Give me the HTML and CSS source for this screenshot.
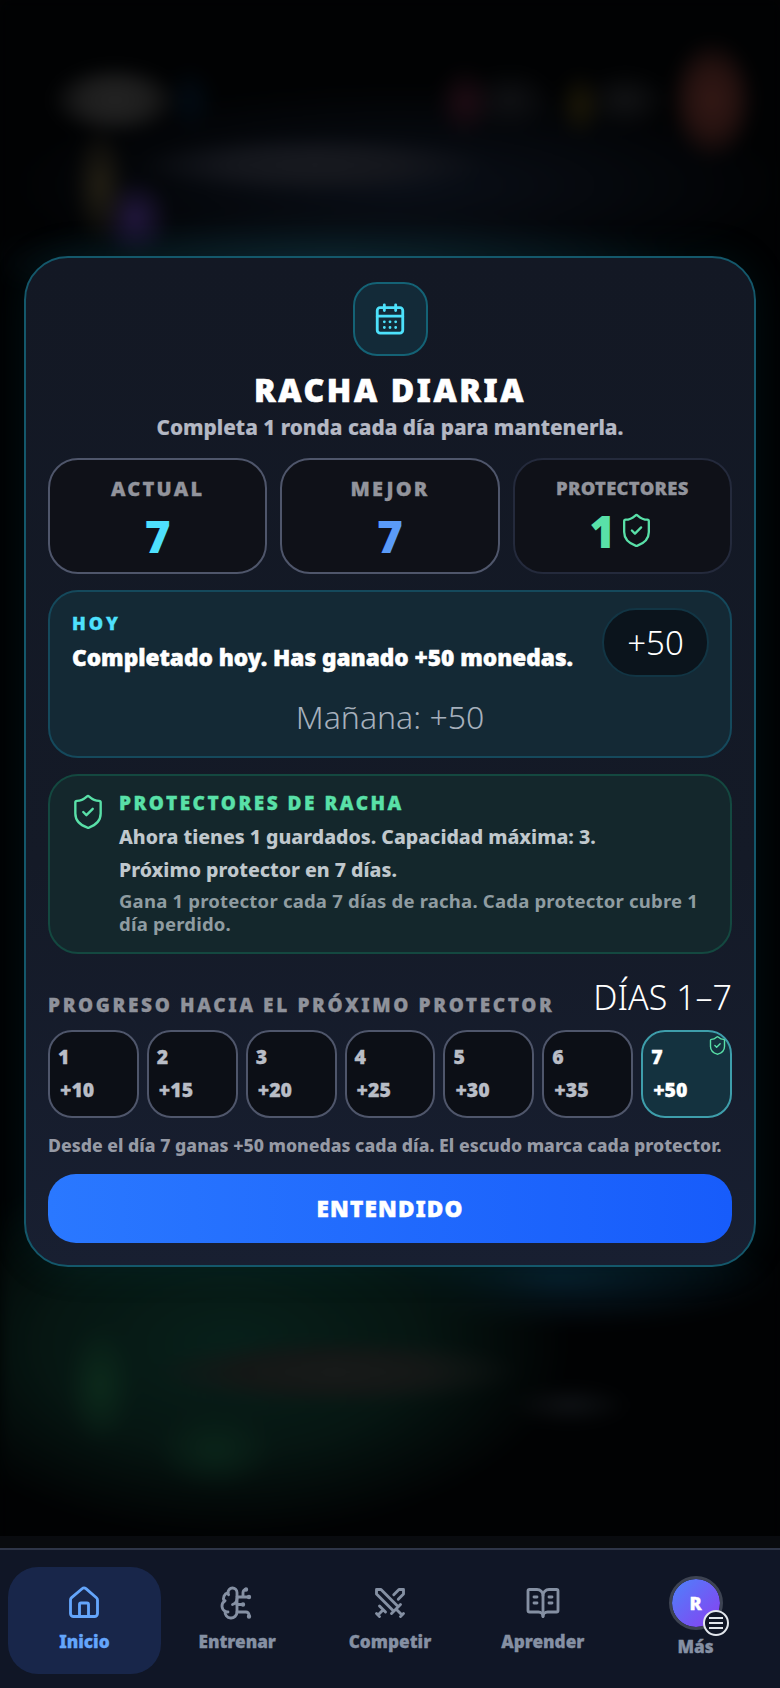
FILE: index.html
```html
<!DOCTYPE html>
<html lang="es">
<head>
<meta charset="utf-8">
<title>Racha diaria</title>
<link rel="stylesheet" href="styles.css">
</head>
<body>
<svg class="defs" width="0" height="0" aria-hidden="true">
  <symbol id="shield" viewBox="0 0 24 24"><path d="M20 13c0 5-3.5 7.5-7.66 8.95a1 1 0 0 1-.67-.01C7.5 20.5 4 18 4 13V6a1 1 0 0 1 1-1c2 0 4.5-1.2 6.24-2.72a1.17 1.17 0 0 1 1.52 0C14.51 3.81 17 5 19 5a1 1 0 0 1 1 1z"/><path d="m9 12 2 2 4-4"/></symbol>
</svg>
<div class="backdrop"></div>
<main class="stage">
  <section class="modal">
    <div class="badge">
      <svg class="badge-icon" viewBox="0 0 24 24"><path d="M8 2v4M16 2v4M3 10h18"/><rect x="3" y="4" width="18" height="18" rx="2"/><path d="M8 14h.01M12 14h.01M16 14h.01M8 18h.01M12 18h.01M16 18h.01"/></svg>
    </div>
    <h1 class="title">RACHA DIARIA</h1>
    <p class="subtitle">Completa 1 ronda cada día para mantenerla.</p>

    <div class="stats">
      <div class="stat">
        <div class="stat-label">ACTUAL</div>
        <div class="stat-value cyan">7</div>
      </div>
      <div class="stat">
        <div class="stat-label">MEJOR</div>
        <div class="stat-value blue">7</div>
      </div>
      <div class="stat stat-dim">
        <div class="stat-label small">PROTECTORES</div>
        <div class="stat-value green">1<svg class="stat-shield"><use href="#shield"/></svg></div>
      </div>
    </div>

    <div class="today">
      <div class="today-top">
        <div>
          <div class="today-label">HOY</div>
          <div class="today-text">Completado hoy. Has ganado +50 monedas.</div>
        </div>
        <div class="pill">+50</div>
      </div>
      <div class="tomorrow">Mañana: +50</div>
    </div>

    <div class="guards">
      <svg class="guards-icon"><use href="#shield"/></svg>
      <div class="guards-body">
        <div class="guards-title">PROTECTORES DE RACHA</div>
        <div class="guards-line first">Ahora tienes 1 guardados. Capacidad máxima: 3.</div>
        <div class="guards-line">Próximo protector en 7 días.</div>
        <div class="guards-note">Gana 1 protector cada 7 días de racha. Cada protector cubre 1 día perdido.</div>
      </div>
    </div>

    <div class="progress-head">
      <div class="progress-title">PROGRESO HACIA EL PRÓXIMO PROTECTOR</div>
      <div class="progress-range">DÍAS 1–7</div>
    </div>
    <div class="days">
      <div class="day"><span class="day-n">1</span><span class="day-c">+10</span></div>
      <div class="day"><span class="day-n">2</span><span class="day-c">+15</span></div>
      <div class="day"><span class="day-n">3</span><span class="day-c">+20</span></div>
      <div class="day"><span class="day-n">4</span><span class="day-c">+25</span></div>
      <div class="day"><span class="day-n">5</span><span class="day-c">+30</span></div>
      <div class="day"><span class="day-n">6</span><span class="day-c">+35</span></div>
      <div class="day day-on"><span class="day-n">7</span><span class="day-c">+50</span><svg class="day-shield"><use href="#shield"/></svg></div>
    </div>
    <p class="note">Desde el día 7 ganas +50 monedas cada día. El escudo marca cada protector.</p>
    <button class="cta">ENTENDIDO</button>
  </section>
</main>
<nav class="nav">
  <div class="tab tab-on">
    <svg class="tab-icon" viewBox="0 0 24 24"><path d="M15 21v-8a1 1 0 0 0-1-1h-4a1 1 0 0 0-1 1v8"/><path d="M3 10a2 2 0 0 1 .709-1.528l7-5.999a2 2 0 0 1 2.582 0l7 5.999A2 2 0 0 1 21 10v9a2 2 0 0 1-2 2H5a2 2 0 0 1-2-2z"/></svg>
    <span>Inicio</span>
  </div>
  <div class="tab">
    <svg class="tab-icon" viewBox="0 0 24 24"><path d="M12 5a3 3 0 1 0-5.997.125 4 4 0 0 0-2.526 5.77 4 4 0 0 0 .556 6.588A4 4 0 1 0 12 18Z"/><path d="M9 13a4.5 4.5 0 0 0 3-4M6.003 5.125A3 3 0 0 0 6.401 6.5M3.477 10.896a4 4 0 0 1 .585-.396M6 18a4 4 0 0 1-1.967-.516M12 13h4M12 18h6a2 2 0 0 1 2 2v1M12 8h8M16 8V5a2 2 0 0 1 2-2"/><circle cx="16" cy="13" r=".5"/><circle cx="18" cy="3" r=".5"/><circle cx="20" cy="21" r=".5"/><circle cx="20" cy="8" r=".5"/></svg>
    <span>Entrenar</span>
  </div>
  <div class="tab">
    <svg class="tab-icon" viewBox="0 0 24 24"><path d="M14.5 17.5 3 6V3h3l11.5 11.5M13 19l6-6M16 16l4 4M19 21l2-2M14.5 6.5 18 3h3v3l-3.5 3.5M5 14l4 4M7 17l-3 3M3 19l2 2"/></svg>
    <span>Competir</span>
  </div>
  <div class="tab">
    <svg class="tab-icon" viewBox="0 0 24 24"><path d="M12 7v14M16 12h2M16 8h2M6 12h2M6 8h2"/><path d="M3 18a1 1 0 0 1-1-1V4a1 1 0 0 1 1-1h5a4 4 0 0 1 4 4 4 4 0 0 1 4-4h5a1 1 0 0 1 1 1v13a1 1 0 0 1-1 1h-6a3 3 0 0 0-3 3 3 3 0 0 0-3-3z"/></svg>
    <span>Aprender</span>
  </div>
  <div class="tab tab-more">
    <div class="avatar">R
      <div class="menu-dot"><i></i><i></i><i></i></div>
    </div>
    <span>Más</span>
  </div>
</nav>
</body>
</html>
```
FILE: styles.css
```css
* { box-sizing: border-box; }
html, body { margin: 0; padding: 0; }
body {
  position: relative;
  width: 780px;
  height: 1688px;
  display: flex;
  flex-direction: column;
  overflow: hidden;
  background: #020304;
  font-family: "Noto Sans", "Open Sans", sans-serif;
  color: #fff;
}
.defs { position: absolute; }
.backdrop {
  position: absolute;
  inset: 0 0 140px 0;
  filter: blur(7px);
  background:
    radial-gradient(ellipse 65px 36px at 115px 100px, #232323 0%, #1d1d1d 50%, transparent 100%),
    radial-gradient(ellipse 26px 34px at 190px 100px, #020b14 0%, transparent 100%),
    radial-gradient(ellipse 30px 36px at 465px 102px, #1f0c14 0%, transparent 100%),
    radial-gradient(ellipse 45px 32px at 510px 100px, #101114 0%, transparent 100%),
    radial-gradient(ellipse 24px 34px at 580px 105px, #1b1707 0%, transparent 100%),
    radial-gradient(ellipse 45px 30px at 625px 100px, #121315 0%, transparent 100%),
    radial-gradient(ellipse 44px 62px at 712px 100px, #331815 0%, #261210 50%, transparent 100%),
    radial-gradient(ellipse 28px 60px at 100px 185px, #231f14 0%, transparent 100%),
    radial-gradient(ellipse 36px 40px at 135px 218px, #231840 0%, transparent 100%),
    radial-gradient(ellipse 175px 30px at 315px 165px, #181a20 0%, #14161c 50%, transparent 100%),
    radial-gradient(ellipse 360px 50px at 330px 262px, #0d2029 0%, transparent 100%),
    radial-gradient(ellipse 390px 100px at 400px 185px, #0a0f18 0%, transparent 100%),
    radial-gradient(ellipse 34px 60px at 100px 1385px, #0c2a1b 0%, transparent 100%),
    radial-gradient(ellipse 185px 34px at 335px 1372px, #181b1a 0%, #141716 50%, transparent 100%),
    radial-gradient(ellipse 60px 20px at 570px 1405px, #0f1215 0%, transparent 100%),
    radial-gradient(ellipse 60px 40px at 215px 1450px, #0a2419 0%, transparent 100%),
    radial-gradient(ellipse 340px 190px at 230px 1345px, #07201a 0%, #061612 55%, transparent 100%),
    radial-gradient(ellipse 220px 50px at 560px 1278px, #071c28 0%, transparent 100%),
    #010203;
}
.stage {
  position: relative;
  flex: 1;
  padding: 256px 24px 0;
}
.modal {
  height: 1011px;
  padding: 24px 22px 0;
  display: flex;
  flex-direction: column;
  border: 2px solid #14586b;
  border-radius: 44px;
  background: linear-gradient(180deg, #131824 0%, #141a27 60%, #181f31 100%);
  box-shadow: 0 0 40px rgba(20, 120, 140, 0.12);
}
.badge {
  align-self: center;
  width: 75px;
  height: 74px;
  display: flex;
  align-items: center;
  justify-content: center;
  border: 2px solid #146275;
  border-radius: 24px;
  background: #132a38;
}
.badge-icon { width: 34px; height: 34px; fill: none; stroke: #4de1fb; stroke-width: 2; stroke-linecap: round; stroke-linejoin: round; }
.title {
  margin: 12px 0 0;
  text-align: center;
  font-size: 32px;
  line-height: 44px;
  font-weight: 900;
  letter-spacing: 2.6px;
  -webkit-text-stroke: .6px currentColor;
}
.subtitle {
  margin: 1px 0 0;
  text-align: center;
  font-size: 20.8px;
  line-height: 28px;
  font-weight: 800;
  color: #b4b8c4;
  -webkit-text-stroke: .2px currentColor;
}
.stats {
  margin-top: 17px;
  display: grid;
  grid-template-columns: repeat(3, 1fr);
  gap: 13px;
}
.stat {
  height: 116px;
  padding-top: 16px;
  display: flex;
  flex-direction: column;
  align-items: center;
  border: 2px solid #4f566b;
  border-radius: 30px;
  background: #0f1118;
}
.stat-dim { border-color: #242a3c; }
.stat-label {
  font-size: 20px;
  line-height: 26px;
  font-weight: 900;
  letter-spacing: 2.2px;
  color: #92949c;
  -webkit-text-stroke: .3px currentColor;
}
.stat-label.small { font-size: 18.4px; letter-spacing: .3px; line-height: 24px; }
.stat-value {
  margin-top: 9px;
  display: flex;
  align-items: center;
  font-size: 44px;
  line-height: 50px;
  font-weight: 900;
}
.stat-dim .stat-value { margin-top: 6px; }
.cyan { color: #4ee0fd; }
.blue { color: #5a9bf8; }
.green { color: #59e0a8; }
.stat-shield { width: 37px; height: 37px; margin: -2px 0 0 3px; fill: none; stroke: #59e0a8; stroke-width: 1.5; stroke-linecap: round; stroke-linejoin: round; }
.today {
  margin-top: 16px;
  height: 168px;
  padding: 19px 22px 0 22px;
  border: 2px solid #15495c;
  border-radius: 30px;
  background: #142935;
}
.today-top { display: flex; justify-content: space-between; align-items: flex-start; }
.today-label {
  font-size: 18px;
  line-height: 24px;
  font-weight: 900;
  letter-spacing: 3px;
  color: #4ee0fd;
  -webkit-text-stroke: .3px currentColor;
}
.today-text {
  margin-top: 8px;
  font-size: 22.6px;
  line-height: 30px;
  font-weight: 900;
  white-space: nowrap;
  -webkit-text-stroke: .5px currentColor;
}
.pill {
  flex: none;
  width: 107px;
  height: 69px;
  display: flex;
  align-items: center;
  justify-content: center;
  margin: -3px -1px 0 0;
  border: 2px solid #123544;
  border-radius: 34px;
  background: #0b141c;
  font-size: 33px;
  font-weight: 300;
}
.tomorrow {
  margin-top: 19px;
  text-align: center;
  font-size: 32px;
  line-height: 42px;
  font-weight: 300;
  color: #a6b0bc;
}
.guards {
  margin-top: 16px;
  height: 180px;
  padding: 15px 20px 0 19px;
  display: flex;
  gap: 12px;
  border: 2px solid #144840;
  border-radius: 30px;
  background: #14272c;
}
.guards-icon { flex: none; width: 38px; height: 38px; margin-top: 2px; fill: none; stroke: #59e0a8; stroke-width: 1.5; stroke-linecap: round; stroke-linejoin: round; }
.guards-title {
  font-size: 19px;
  line-height: 24px;
  font-weight: 900;
  letter-spacing: 2.5px;
  color: #59e0a8;
  -webkit-text-stroke: .3px currentColor;
}
.guards-line {
  margin-top: 7px;
  font-size: 19.5px;
  line-height: 26px;
  font-weight: 800;
  color: #c0c8cd;
}
.guards-line.first { margin-top: 9px; }
.guards-note {
  margin-top: 6px;
  font-size: 18.55px;
  line-height: 23px;
  font-weight: 700;
  letter-spacing: .2px;
  color: #8f9ca1;
}
.progress-head {
  margin-top: 23px;
  display: flex;
  justify-content: space-between;
  align-items: flex-end;
}
.progress-title {
  font-size: 19px;
  line-height: 24px;
  font-weight: 900;
  letter-spacing: 2.62px;
  color: #8f929b;
  -webkit-text-stroke: .3px currentColor;
}
.progress-range { font-size: 34px; line-height: 40px; font-weight: 300; white-space: nowrap; }
.days {
  margin-top: 13px;
  display: grid;
  grid-template-columns: repeat(7, 1fr);
  gap: 8px;
}
.day {
  position: relative;
  height: 88px;
  padding: 13px 8px 0 8px;
  display: flex;
  flex-direction: column;
  gap: 9px;
  border: 2px solid #4f566b;
  border-radius: 24px;
  background: #0c0f16;
}
.day-n, .day-c { font-size: 19.5px; line-height: 24px; font-weight: 900; color: #b9bdc6; -webkit-text-stroke: .3px currentColor; }
.day-c { padding-left: 2px; }
.day-on { border-color: #3e9eab; background: #14323f; }
.day-on .day-n, .day-on .day-c { color: #fff; }
.day-shield { position: absolute; top: 3px; right: 2px; width: 21px; height: 21px; fill: none; stroke: #59e0a8; stroke-width: 1.6; stroke-linecap: round; stroke-linejoin: round; }
.note {
  margin: 15px 0 0;
  font-size: 17.7px;
  line-height: 24px;
  font-weight: 800;
  white-space: nowrap;
  color: #969aa5;
}
.cta {
  margin-top: 17px;
  width: 100%;
  height: 69px;
  border: 0;
  border-radius: 28px;
  background: linear-gradient(90deg, #2a78ff 0%, #175cfb 100%);
  color: #fff;
  font-family: inherit;
  font-size: 22.5px;
  font-weight: 900;
  letter-spacing: 1.2px;
  -webkit-text-stroke: .5px currentColor;
}
.nav {
  position: relative;
  height: 140px;
  padding: 17px 8px 0;
  display: grid;
  grid-template-columns: repeat(5, 1fr);
  gap: 0;
  border-top: 2px solid #2e3548;
  background: #101626;
  box-shadow: 0 -12px 0 #090b0f;
}
.tab {
  height: 107px;
  padding-top: 18px;
  display: flex;
  flex-direction: column;
  align-items: center;
  gap: 8px;
  font-size: 17.2px;
  line-height: 26px;
  font-weight: 900;
  color: #8590a3;
  -webkit-text-stroke: .3px currentColor;
}
.tab-on { border-radius: 30px; background: #18264a; color: #64a5fb; }
.tab-icon { width: 36px; height: 36px; fill: none; stroke: currentColor; stroke-width: 1.9; stroke-linecap: round; stroke-linejoin: round; }
.tab-more { padding-top: 9px; gap: 4px; }
.avatar {
  position: relative;
  width: 54px;
  height: 54px;
  display: flex;
  align-items: center;
  justify-content: center;
  border: 3px solid #3d4352;
  border-radius: 50%;
  background: linear-gradient(135deg, #4d82fb 0%, #8a3ef0 100%);
  background-clip: padding-box;
  color: #fff;
  font-size: 18px;
  font-weight: 900;
}
.menu-dot {
  position: absolute;
  right: -9px;
  bottom: -9px;
  width: 26px;
  height: 26px;
  display: flex;
  flex-direction: column;
  align-items: center;
  justify-content: center;
  gap: 3px;
  border: 2px solid #e2e6ec;
  border-radius: 50%;
  background: #101626;
}
.menu-dot i { display: block; width: 14px; height: 2px; background: #e2e6ec; }
```
